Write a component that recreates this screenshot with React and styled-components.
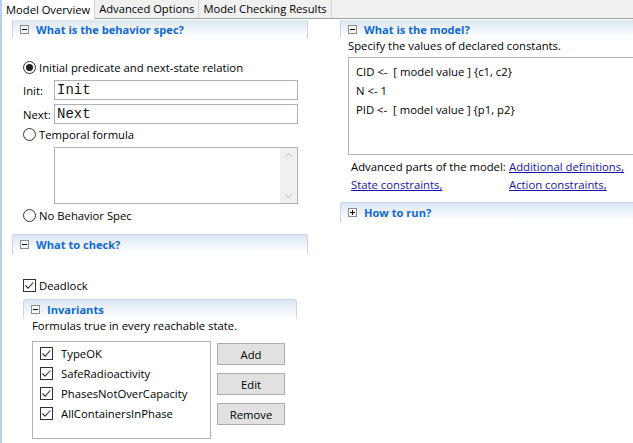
import React from "react";
import styled, { createGlobalStyle } from "styled-components";

const GlobalStyle = createGlobalStyle`
  html, body { margin: 0; padding: 0; background: #fff; }
  body {
    font-family: "Open Sans", "Noto Sans", sans-serif;
    font-size: 11.3px;
    color: #000;
  }
`;

const Root = styled.div`
  width: 633px;
  height: 443px;
  overflow: hidden;
  border-left: 2px solid #b7cfea;
  box-sizing: border-box;
  background: #fff;
`;

const TabBar = styled.div`
  display: flex;
  height: 19px;
  background: #f0f0f0;
  border-bottom: 1px solid #a3a3a3;
  box-sizing: border-box;
`;

const Tab = styled.div`
  display: flex;
  align-items: center;
  padding: 0 4px;
  height: ${(p) => (p.$active ? "19px" : "18px")};
  background: ${(p) => (p.$active ? "#fff" : "#f0f0f0")};
  border-right: 1px solid #d4d4d4;
  white-space: nowrap;
  font-size: 11.2px;
  line-height: 18px;
`;

const Page = styled.div`
  display: flex;
  align-items: flex-start;
`;

const LeftCol = styled.div`
  margin-left: 10px;
  width: 296px;
  flex: none;
`;

const RightCol = styled.div`
  margin-left: 32px;
  width: 320px;
  flex: none;
`;

const SectionHeader = styled.div`
  display: flex;
  align-items: center;
  gap: 7px;
  height: ${(p) => (p.$flush ? "19px" : "20px")};
  padding-left: 7px;
  box-sizing: border-box;
  border: 1px solid #c9d7e8;
  border-top-color: ${(p) => (p.$flush ? "transparent" : "#c3d2e4")};
  border-bottom: none;
  border-radius: 3px 3px 0 0;
  background: linear-gradient(#dce6f2, #ffffff 95%);
`;

const Title = styled.span`
  font-weight: 700;
  color: #1069d3;
  font-size: 11.1px;
  white-space: nowrap;
`;

const ToggleBox = styled.svg`
  flex: none;
  width: 9px;
  height: 9px;
`;

function Toggle({ open }) {
  return (
    <ToggleBox viewBox="0 0 9 9">
      <rect x="0.5" y="0.5" width="8" height="8" fill="#f7f7f7" stroke="#8c8c8c" />
      <path d="M2 4.5h5" stroke="#000" strokeWidth="1" />
      {!open && <path d="M4.5 2v5" stroke="#000" strokeWidth="1" />}
    </ToggleBox>
  );
}

const SpecBody = styled.div`
  padding: 21px 0 0 11px;
`;

const OptionRow = styled.div`
  display: flex;
  align-items: center;
  gap: 3px;
  height: 16px;
  margin-top: ${(p) => p.$mt || 0}px;
  white-space: nowrap;
`;

const RadioDot = styled.span`
  flex: none;
  width: 13px;
  height: 13px;
  border: 1px solid #333;
  border-radius: 50%;
  box-sizing: border-box;
  display: flex;
  align-items: center;
  justify-content: center;
  background: #fff;
  &::after {
    content: "";
    width: 7px;
    height: 7px;
    border-radius: 50%;
    background: ${(p) => (p.$checked ? "#222" : "transparent")};
  }
`;

const FieldRow = styled.div`
  display: flex;
  align-items: center;
  margin-top: ${(p) => p.$mt || 0}px;
`;

const FieldLabel = styled.span`
  width: 31px;
  flex: none;
`;

const TextField = styled.div`
  width: 244px;
  height: 20px;
  box-sizing: border-box;
  border: 1px solid #acb3bc;
  padding: 0 2px;
  font-family: "Liberation Mono", monospace;
  font-size: 14px;
  line-height: 18px;
  color: #111;
`;

const TextArea = styled.div`
  margin: 5px 0 0 31px;
  width: 244px;
  height: 57px;
  box-sizing: border-box;
  border: 1px solid #acb3bc;
  display: flex;
  justify-content: flex-end;
`;

const ScrollTrack = styled.div`
  width: 17px;
  background: #f0f0f0;
  display: flex;
  flex-direction: column;
  justify-content: space-between;
  align-items: center;
  padding: 4px 0;
`;

const CheckBody = styled.div`
  padding: 23px 0 0 11px;
`;

const CheckBoxBox = styled.svg`
  flex: none;
  width: 13px;
  height: 13px;
`;

function Check() {
  return (
    <CheckBoxBox viewBox="0 0 13 13">
      <rect x="0.5" y="0.5" width="12" height="12" fill="#fff" stroke="#333" />
      <path d="M2.5 6.5l2.6 2.6 5.2-5.6" fill="none" stroke="#333" strokeWidth="1.1" />
    </CheckBoxBox>
  );
}

const SubSection = styled.div`
  margin-top: 6px;
  width: 274px;
`;

const SubBody = styled.div`
  padding: 0 0 0 9px;
`;

const Hint = styled.div`
  height: 14px;
  line-height: 14px;
  margin-top: ${(p) => p.$mt || 0}px;
  white-space: nowrap;
`;

const ListArea = styled.div`
  display: flex;
  gap: 6px;
  margin-top: 8px;
`;

const FormulaList = styled.div`
  width: 179px;
  height: 98px;
  box-sizing: border-box;
  border: 1px solid #acb3bc;
  padding: 1px 0 0 7px;
`;

const FormulaItem = styled.div`
  display: flex;
  align-items: center;
  gap: 8px;
  height: 20px;
  white-space: nowrap;
`;

const Buttons = styled.div`
  display: flex;
  flex-direction: column;
  gap: 8px;
  padding-top: 2px;
`;

const Button = styled.div`
  width: 68px;
  height: 22px;
  box-sizing: border-box;
  border: 1px solid #adadad;
  background: #e1e1e1;
  display: flex;
  align-items: center;
  justify-content: center;
`;

const ModelBody = styled.div`
  padding-left: 8px;
`;

const ConstantsBox = styled.div`
  margin-top: 4px;
  height: 98px;
  box-sizing: border-box;
  border: 1px solid #acb3bc;
  border-right: none;
  padding: 4px 0 0 7px;
`;

const ConstantLine = styled.div`
  height: 19px;
  line-height: 19px;
  white-space: nowrap;
`;

const AdvancedGrid = styled.div`
  display: grid;
  grid-template-columns: 158px auto;
  row-gap: 4px;
  margin: 5px 0 0 3px;
  line-height: 14px;
  white-space: nowrap;
`;

const Link = styled.span`
  color: #1414a8;
  text-decoration: underline;
`;

const RunSection = styled.div`
  margin-top: 10px;
`;

const formulas = ["TypeOK", "SafeRadioactivity", "PhasesNotOverCapacity", "AllContainersInPhase"];

export default function App() {
  return (
    <Root>
      <GlobalStyle />
      <TabBar>
        <Tab $active>Model Overview</Tab>
        <Tab>Advanced Options</Tab>
        <Tab>Model Checking Results</Tab>
      </TabBar>
      <Page>
        <LeftCol>
          <SectionHeader $flush>
            <Toggle open />
            <Title>What is the behavior spec?</Title>
          </SectionHeader>
          <SpecBody>
            <OptionRow>
              <RadioDot $checked />
              <span>Initial predicate and next-state relation</span>
            </OptionRow>
            <FieldRow $mt={5}>
              <FieldLabel>Init:</FieldLabel>
              <TextField>Init</TextField>
            </FieldRow>
            <FieldRow $mt={4}>
              <FieldLabel>Next:</FieldLabel>
              <TextField>Next</TextField>
            </FieldRow>
            <OptionRow $mt={2}>
              <RadioDot />
              <span>Temporal formula</span>
            </OptionRow>
            <TextArea>
              <ScrollTrack>
                <svg width="9" height="6" viewBox="0 0 9 6">
                  <path d="M1 5l3.5-3.5L8 5" fill="none" stroke="#bdbdbd" />
                </svg>
                <svg width="9" height="6" viewBox="0 0 9 6">
                  <path d="M1 1l3.5 3.5L8 1" fill="none" stroke="#bdbdbd" />
                </svg>
              </ScrollTrack>
            </TextArea>
            <OptionRow $mt={3}>
              <RadioDot />
              <span>No Behavior Spec</span>
            </OptionRow>
          </SpecBody>

          <div style={{ height: 11 }} />
          <SectionHeader>
            <Toggle open />
            <Title>What to check?</Title>
          </SectionHeader>
          <CheckBody>
            <OptionRow>
              <Check />
              <span>Deadlock</span>
            </OptionRow>
            <SubSection>
              <SectionHeader>
                <Toggle open />
                <Title>Invariants</Title>
              </SectionHeader>
              <SubBody>
                <Hint>Formulas true in every reachable state.</Hint>
                <ListArea>
                  <FormulaList>
                    {formulas.map((f) => (
                      <FormulaItem key={f}>
                        <Check />
                        <span>{f}</span>
                      </FormulaItem>
                    ))}
                  </FormulaList>
                  <Buttons>
                    <Button>Add</Button>
                    <Button>Edit</Button>
                    <Button>Remove</Button>
                  </Buttons>
                </ListArea>
              </SubBody>
            </SubSection>
          </CheckBody>
        </LeftCol>

        <RightCol>
          <SectionHeader $flush>
            <Toggle open />
            <Title>What is the model?</Title>
          </SectionHeader>
          <ModelBody>
            <Hint $mt={1}>Specify the values of declared constants.</Hint>
            <ConstantsBox>
              <ConstantLine>CID &lt;-&nbsp; [ model value ] {"{c1, c2}"}</ConstantLine>
              <ConstantLine>N &lt;- 1</ConstantLine>
              <ConstantLine>PID &lt;-&nbsp; [ model value ] {"{p1, p2}"}</ConstantLine>
            </ConstantsBox>
            <AdvancedGrid>
              <span>Advanced parts of the model:</span>
              <Link>Additional definitions,</Link>
              <Link>State constraints,</Link>
              <Link>Action constraints,</Link>
            </AdvancedGrid>
          </ModelBody>
          <RunSection>
            <SectionHeader>
              <Toggle />
              <Title>How to run?</Title>
            </SectionHeader>
          </RunSection>
        </RightCol>
      </Page>
    </Root>
  );
}
